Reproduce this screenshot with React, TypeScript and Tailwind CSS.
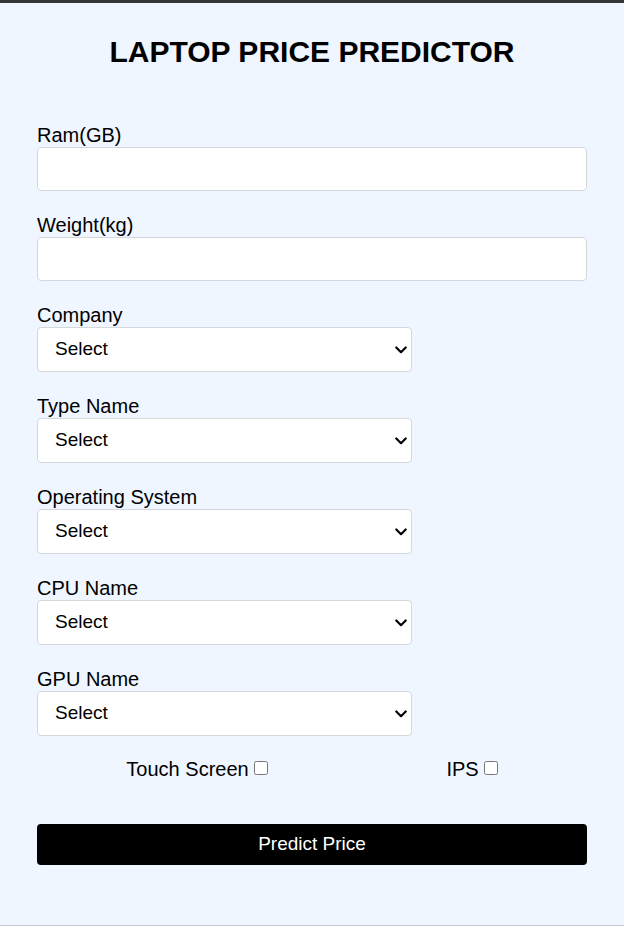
const selects = ["Company", "Type Name", "Operating System", "CPU Name", "GPU Name"];

function SelectField({ label }: { label: string }) {
  return (
    <div className="mt-[22px] flex flex-col">
      <label className="text-[20px] leading-[24px] text-black">{label}</label>
      <div className="relative w-[375px]">
        <select
          defaultValue=""
          className="h-[45px] w-full appearance-none rounded-[4px] border border-[#d4d8dd] bg-white pl-[17px] text-[19px] text-black outline-none"
        >
          <option value="">Select</option>
        </select>
        <svg
          className="pointer-events-none absolute right-[5px] top-1/2 h-[8px] w-[12px] -translate-y-1/2"
          viewBox="0 0 12 8"
          fill="none"
        >
          <path d="M1.3 1.5 L6 6.2 L10.7 1.5" stroke="#000" strokeWidth="2.2" strokeLinecap="round" strokeLinejoin="round" />
        </svg>
      </div>
    </div>
  );
}

export default function App() {
  return (
    <div
      className="flex min-h-[926px] flex-col border-b border-[#c5cbd2] bg-[#eff6ff]"
      style={{ fontFamily: '"Liberation Sans", Arial, sans-serif' }}
    >
      <div className="h-[3px] bg-[#353535]" />
      <div className="flex flex-col px-[37px]">
        <h1 className="mt-[32px] text-center text-[30px] font-bold leading-[34px] text-black">
          LAPTOP PRICE PREDICTOR
        </h1>

        <div className="mt-[54px] flex flex-col">
          <label className="text-[20px] leading-[24px] text-black">Ram(GB)</label>
          <input className="h-[44px] w-full rounded-[4px] border border-[#d4d8dd] bg-white px-3 outline-none" />
        </div>

        <div className="mt-[22px] flex flex-col">
          <label className="text-[20px] leading-[24px] text-black">Weight(kg)</label>
          <input className="h-[44px] w-full rounded-[4px] border border-[#d4d8dd] bg-white px-3 outline-none" />
        </div>

        {selects.map((s) => (
          <SelectField key={s} label={s} />
        ))}

        <div className="mt-[21px] flex justify-around text-[20px] leading-[24px] text-black">
          <label className="flex items-center gap-[5px]">
            Touch Screen
            <input type="checkbox" className="m-0 mb-[2px] h-[14px] w-[14px]" />
          </label>
          <label className="flex items-center gap-[5px]">
            IPS
            <input type="checkbox" className="m-0 mb-[2px] h-[14px] w-[14px]" />
          </label>
        </div>

        <button className="mt-[43px] h-[41px] w-full rounded-[4px] bg-black text-[19px] text-white">
          Predict Price
        </button>
      </div>
    </div>
  );
}
